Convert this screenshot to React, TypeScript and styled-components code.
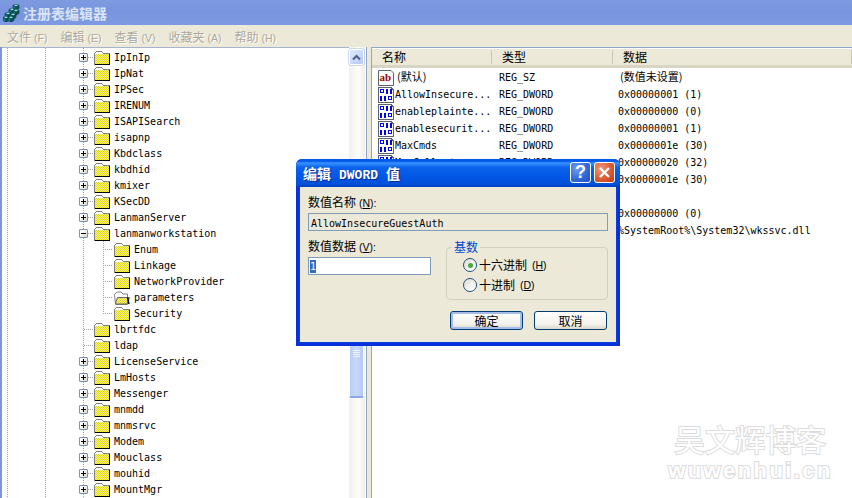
import React from "react";
import styled, { createGlobalStyle } from "styled-components";

const Global = createGlobalStyle`
  html, body { margin: 0; padding: 0; background: #fff; }
  * { box-sizing: border-box; }
`;

const mono = `"DejaVu Sans Mono", "Liberation Mono", "Noto Sans CJK SC", monospace`;
const cjk = `"Noto Sans CJK SC", "Liberation Sans", sans-serif`;

const Page = styled.div`
  position: relative;
  width: 852px;
  height: 498px;
  overflow: hidden;
  display: flex;
  flex-direction: column;
  background: #fff;
  color: #000;
`;

const TitleBar = styled.div`
  height: 25px;
  flex: none;
  display: flex;
  align-items: center;
  gap: 3px;
  padding-left: 3px;
  background: linear-gradient(180deg, #7e9ae0 0%, #7894de 45%, #7d9ae3 100%);
`;

const TitleText = styled.span`
  font: bold 14px ${cjk};
  color: #d9e4f8;
`;

const MenuBar = styled.div`
  height: 22px;
  flex: none;
  display: flex;
  align-items: center;
  gap: 13px;
  padding-left: 7px;
  background: #ece9d8;
`;

const MenuItem = styled.span`
  font: 12px ${cjk};
  color: #aca899;
  text-shadow: 1px 1px 0 #fff;
  white-space: nowrap;
`;

const Hotkey = styled.span`
  font: 10.5px "Liberation Sans", sans-serif;
  margin-left: 3px;
  white-space: nowrap;
`;

const Main = styled.div`
  flex: 1;
  min-height: 0;
  display: flex;
  border-left: 2px solid #7b96dc;
  background: #ece9d8;
`;

const TreePane = styled.div`
  width: 347px;
  flex: none;
  padding-top: 1px;
  border-top: 1px solid #a6b4cf;
  background-color: #fff;
  background-image:
    repeating-linear-gradient(180deg, #a0a0a0 0 1px, transparent 1px 2px),
    repeating-linear-gradient(180deg, #a0a0a0 0 1px, transparent 1px 2px),
    repeating-linear-gradient(180deg, #a0a0a0 0 1px, transparent 1px 2px);
  background-size: 1px 100%;
  background-repeat: no-repeat;
  background-position: 5px 0, 43px 0, 81px 0;
`;

const TreeRow = styled.div<{ $child?: boolean }>`
  height: 16px;
  display: flex;
  align-items: center;
  padding-left: ${(p) => (p.$child ? 101 : 77)}px;
  font: 10px ${mono};
  white-space: pre;
`;

const ExpandBox = styled.span`
  width: 9px;
  height: 9px;
  flex: none;
  position: relative;
  border: 1px solid #7c93ae;
  border-radius: 1px;
  background: linear-gradient(135deg, #fff 30%, #d5d2c4 100%);
`;

const ExpandBar = styled.span<{ $vertical?: boolean }>`
  position: absolute;
  background: #000;
  left: ${(p) => (p.$vertical ? 3 : 1)}px;
  top: ${(p) => (p.$vertical ? 1 : 3)}px;
  width: ${(p) => (p.$vertical ? 1 : 5)}px;
  height: ${(p) => (p.$vertical ? 5 : 1)}px;
`;

const DotLink = styled.span<{ $w: number }>`
  width: ${(p) => p.$w}px;
  height: 1px;
  flex: none;
  background: repeating-linear-gradient(90deg, #a0a0a0 0 1px, transparent 1px 2px);
`;

const NoBoxGap = styled.span`
  width: 5px;
  flex: none;
`;

const ChildGuide = styled.span<{ $last?: boolean }>`
  width: 11px;
  height: 16px;
  flex: none;
  display: flex;
  align-items: center;
  background-image: repeating-linear-gradient(180deg, #a0a0a0 0 1px, transparent 1px 2px);
  background-size: 1px ${(p) => (p.$last ? "8px" : "100%")};
  background-repeat: no-repeat;
`;

const FolderWrap = styled.span`
  width: 16px;
  height: 15px;
  flex: none;
  margin-right: 4px;
  display: flex;
`;

const Scrollbar = styled.div`
  width: 17px;
  flex: none;
  display: flex;
  flex-direction: column;
  padding-top: 2px;
  background: linear-gradient(90deg, #f3f1ec 0%, #fdfdfa 60%, #f0eee6 100%);
  border-right: 1px solid #fff;
`;

const ScrollUp = styled.div`
  height: 16px;
  flex: none;
  margin: 0 1px 0 0;
  border: 1px solid #fff;
  border-radius: 2px;
  display: flex;
  align-items: center;
  justify-content: center;
  background: linear-gradient(135deg, #dfe9fd 0%, #b6caf6 100%);
  box-shadow: 0 0 0 0.5px #9cb4e6;
`;

const ScrollThumb = styled.div`
  height: 88px;
  flex: none;
  margin: 245px 1px 0 0;
  border: 1px solid #fff;
  border-bottom: 2px solid #8aa7ea;
  border-radius: 2px;
  background: linear-gradient(90deg, #b8ccf7 0%, #c9d8fb 50%, #b2c8f8 100%);
  display: flex;
  align-items: center;
  justify-content: center;
`;

const Splitter = styled.div`
  width: 6px;
  flex: none;
  border-left: 1px solid #8da7c8;
  border-right: 1px solid #8da7c8;
  background: #ece9d8;
`;

const ListPane = styled.div`
  flex: 1;
  min-width: 0;
  background: #fff;
  border-top: 1px solid #8da7c8;
  padding-top: 1px;
`;

const ListHeader = styled.div`
  height: 19px;
  display: flex;
  align-items: center;
  background: #ece9d8;
  border-bottom: 3px solid #d8d5c4;
  font: 12px ${cjk};
`;

const HeaderCell = styled.span<{ $w: number }>`
  width: ${(p) => p.$w}px;
  flex: none;
  padding-left: 10px;
  height: 14px;
  line-height: 14px;
  border-right: 1px solid #c9c6b4;
`;

const ListBody = styled.div`
  padding-top: 1px;
`;

const ListRow = styled.div`
  height: 17px;
  display: flex;
  align-items: center;
  padding-left: 6px;
  font: 10px ${mono};
  white-space: pre;
`;

const IconCell = styled.span`
  width: 16px;
  height: 16px;
  flex: none;
  margin-right: 1px;
  display: flex;
`;

const NameCell = styled.span`
  width: 104px;
  flex: none;
  font-family: ${mono};
`;

const TypeCell = styled.span`
  width: 119px;
  flex: none;
`;

const DataCell = styled.span`
  flex: 1;
`;

const CjkInline = styled.span<{ $pad?: number }>`
  display: block;
  font: 11px/11px ${cjk};
  margin-top: -3px;
  padding-left: ${(p) => p.$pad ?? 0}px;
`;

const Dialog = styled.div`
  position: absolute;
  left: 296px;
  top: 159px;
  width: 324px;
  height: 187px;
  display: flex;
  flex-direction: column;
  border: 3px solid #0831d9;
  border-top: 0;
  border-radius: 6px 6px 0 0;
  background: #ece9d8;
  box-shadow: inset 0 0 0 1px #0a3fdc;
`;

const DialogTitle = styled.div`
  height: 28px;
  flex: none;
  margin: 0 -3px;
  display: flex;
  align-items: center;
  justify-content: space-between;
  padding: 0 5px 1px 7px;
  border-radius: 6px 6px 0 0;
  background: linear-gradient(180deg, #0a58e3 0%, #0058ee 8%, #3a93ff 14%, #0a63ea 30%, #0054e3 70%, #0450d8 90%, #003dc4 100%);
`;

const DialogTitleText = styled.span`
  font: bold 14px ${cjk};
  color: #fff;
  text-shadow: 1px 1px 0 #0a2a8a;
  white-space: pre;
`;

const DialogTitleLatin = styled.span`
  font: bold 13px "Liberation Mono", monospace;
  margin: 0 8px;
`;

const CaptionButtons = styled.div`
  display: flex;
  gap: 3px;
`;

const CaptionButton = styled.span<{ $close?: boolean }>`
  width: 21px;
  height: 21px;
  border: 1px solid #fff;
  border-radius: 3px;
  display: flex;
  align-items: center;
  justify-content: center;
  font: bold 18px "Liberation Sans", sans-serif;
  color: #fff;
  background: ${(p) =>
    p.$close
      ? "radial-gradient(circle at 30% 30%, #ee9a7c 0%, #dc5a35 55%, #c13a15 100%)"
      : "radial-gradient(circle at 30% 30%, #6f9cf2 0%, #2f66d8 60%, #1f50c4 100%)"};
`;

const DialogBody = styled.div`
  flex: 1;
  display: flex;
  flex-direction: column;
  padding: 7px 9px 0 9px;
`;

const FieldLabel = styled.div`
  height: 16px;
  font: 12px/16px ${cjk};
  white-space: pre;
  color: #000;
`;

const Underlined = styled.span`
  text-decoration: underline;
`;

const NameField = styled.div`
  height: 18px;
  margin-top: 3px;
  border: 1px solid #7f9db9;
  background: #ece9d8;
  padding: 2px 0 0 2px;
  font: 10px/16px ${mono};
`;

const ValueRow = styled.div`
  display: flex;
  gap: 15px;
  margin-top: 7px;
`;

const ValueColumn = styled.div`
  width: 123px;
  flex: none;
`;

const ValueInput = styled.div`
  height: 18px;
  margin-top: 3px;
  border: 1px solid #7f9db9;
  background: #fff;
  padding: 2px 0 0 1px;
  display: flex;
`;

const Selected = styled.span`
  width: 6px;
  height: 13px;
  background: #316ac5;
  color: #fff;
  font: 10px/13px ${mono};
`;

const GroupBox = styled.div`
  position: relative;
  width: 162px;
  height: 53px;
  margin-top: 9px;
  padding: 10px 0 0 16px;
  border: 1px solid #d0d0bf;
  border-radius: 4px;
  display: flex;
  flex-direction: column;
  gap: 6px;
`;

const Legend = styled.span`
  position: absolute;
  left: 5px;
  top: -9px;
  padding: 0 2px;
  background: #ece9d8;
  color: #0046d5;
  font: 12px/16px ${cjk};
`;

const RadioRow = styled.div`
  height: 14px;
  display: flex;
  align-items: center;
  gap: 2px;
  font: 12px/14px ${cjk};
  white-space: pre;
`;

const RadioCircle = styled.span<{ $on?: boolean }>`
  width: 14px;
  height: 14px;
  flex: none;
  border: 1px solid #1c5180;
  border-radius: 50%;
  background: linear-gradient(135deg, #dcd9ca 0%, #fff 80%);
  display: flex;
  align-items: center;
  justify-content: center;
  &::after {
    content: "";
    display: ${(p) => (p.$on ? "block" : "none")};
    width: 5px;
    height: 5px;
    border-radius: 50%;
    background: #3fae3b;
  }
`;

const ButtonRow = styled.div`
  display: flex;
  justify-content: flex-end;
  gap: 11px;
  margin-top: 11px;
  padding-right: 1px;
`;

const DialogButton = styled.span<{ $default?: boolean }>`
  width: 73px;
  height: 19px;
  border: 1px solid #003c74;
  border-radius: 3px;
  display: flex;
  align-items: center;
  justify-content: center;
  font: 12px ${cjk};
  background: linear-gradient(180deg, #fff 0%, #f3f2ec 70%, #dcd8ce 100%);
  box-shadow: ${(p) => (p.$default ? "inset 0 0 0 2px #a5bde8" : "none")};
`;

const Watermark = styled.div`
  position: absolute;
  left: 658px;
  top: 420px;
  width: 185px;
  text-align: center;
  pointer-events: none;
`;

const WatermarkTitle = styled.div`
  font: 30px/36px ${cjk};
  letter-spacing: 0.4px;
  color: #fff;
  -webkit-text-stroke: 2px #dcdcdc;
  paint-order: stroke fill;
  white-space: nowrap;
`;

const WatermarkUrl = styled.div`
  margin-top: 3px;
  font: bold 22px/24px "Liberation Sans", sans-serif;
  letter-spacing: 2.4px;
  color: #fff;
  -webkit-text-stroke: 2px #dcdcdc;
  paint-order: stroke fill;
  white-space: nowrap;
`;

const Cube = ({ x, y }: { x: number; y: number }) => (
  <g transform={`translate(${x} ${y})`}>
    <polygon points="0,1.5 3,0 6,1.5 3,3" fill="#7fe8e4" stroke="#06282e" strokeWidth="0.6" />
    <polygon points="0,1.5 3,3 3,6 0,4.5" fill="#138a8e" stroke="#06282e" strokeWidth="0.6" />
    <polygon points="3,3 6,1.5 6,4.5 3,6" fill="#0c5f68" stroke="#06282e" strokeWidth="0.6" />
  </g>
);

const AppIcon = () => (
  <svg width="17" height="18" viewBox="0 0 17 18">
    <Cube x={10} y={0} />
    <Cube x={6} y={4} />
    <Cube x={10} y={5} />
    <Cube x={2} y={8} />
    <Cube x={7} y={9} />
    <Cube x={0} y={12} />
    <Cube x={5} y={12} />
  </svg>
);

const FolderClosed = () => (
  <svg width="16" height="15" viewBox="0 0 16 15" shapeRendering="crispEdges">
    <defs>
      <pattern id="dith" width="2" height="2" patternUnits="userSpaceOnUse">
        <rect width="2" height="2" fill="#ffff33" />
        <rect width="1" height="1" fill="#d8cf60" />
        <rect x="1" y="1" width="1" height="1" fill="#d8cf60" />
      </pattern>
    </defs>
    <path d="M0.5 3.5V14.5H15.5V3.5H9.5L7.5 1.5H2.5L0.5 3.5Z" fill="#fff" stroke="#808080" />
    <rect x="1" y="4" width="14" height="10" fill="url(#dith)" />
    <rect x="1" y="14" width="15" height="1" fill="#000" />
    <rect x="15" y="4" width="1" height="11" fill="#000" />
  </svg>
);

const FolderOpen = () => (
  <svg width="16" height="15" viewBox="0 0 16 15">
    <path d="M0.5 4.5L3 2H7L9 4H13.5V7.5H15.5L13.5 14.5H1.5Z" fill="#fff" stroke="#808080" />
    <path d="M1.5 13L3.5 7.5H15L13 14H2Z" fill="url(#dith)" stroke="#666" />
    <path d="M13.5 7.5L15 14" stroke="#000" strokeWidth="1.4" />
  </svg>
);

const PageShape = () => (
  <path d="M0.5 0.5H13L15.5 3V15.5H0.5Z" fill="#fff" stroke="#5a6470" />
);

const StringIcon = () => (
  <svg width="16" height="16" viewBox="0 0 16 16">
    <PageShape />
    <text x="1.5" y="10.5" fontFamily="Liberation Serif" fontWeight="bold" fontSize="11" fill="#a00000">ab</text>
  </svg>
);

const BinaryIcon = () => (
  <svg width="16" height="16" viewBox="0 0 16 16" shapeRendering="crispEdges">
    <PageShape />
    <g fill="none" stroke="#0000ff">
      <rect x="2.5" y="2.5" width="3" height="3" />
      <path d="M9 1.5V6.5M13 1.5V6.5M3 8.5V13.5M7 8.5V13.5" strokeWidth="2" />
      <rect x="10.5" y="9.5" width="3" height="3" />
    </g>
  </svg>
);

type Node = { name: string; box?: "+" | "-"; child?: boolean; last?: boolean; open?: boolean };

const NODES: Node[] = [
  { name: "IpInIp", box: "+" },
  { name: "IpNat", box: "+" },
  { name: "IPSec", box: "+" },
  { name: "IRENUM", box: "+" },
  { name: "ISAPISearch", box: "+" },
  { name: "isapnp", box: "+" },
  { name: "Kbdclass", box: "+" },
  { name: "kbdhid", box: "+" },
  { name: "kmixer", box: "+" },
  { name: "KSecDD", box: "+" },
  { name: "LanmanServer", box: "+" },
  { name: "lanmanworkstation", box: "-" },
  { name: "Enum", child: true },
  { name: "Linkage", child: true },
  { name: "NetworkProvider", child: true },
  { name: "parameters", child: true, open: true },
  { name: "Security", child: true, last: true },
  { name: "lbrtfdc" },
  { name: "ldap" },
  { name: "LicenseService", box: "+" },
  { name: "LmHosts", box: "+" },
  { name: "Messenger", box: "+" },
  { name: "mnmdd", box: "+" },
  { name: "mnmsrvc", box: "+" },
  { name: "Modem", box: "+" },
  { name: "Mouclass", box: "+" },
  { name: "mouhid", box: "+" },
  { name: "MountMgr", box: "+" },
];

const VALUES = [
  { name: "(默认)", type: "REG_SZ", data: "(数值未设置)", str: true },
  { name: "AllowInsecure...", type: "REG_DWORD", data: "0x00000001 (1)" },
  { name: "enableplainte...", type: "REG_DWORD", data: "0x00000000 (0)" },
  { name: "enablesecurit...", type: "REG_DWORD", data: "0x00000001 (1)" },
  { name: "MaxCmds", type: "REG_DWORD", data: "0x0000001e (30)" },
  { name: "MaxCollect...", type: "REG_DWORD", data: "0x00000020 (32)" },
  { name: "", type: "", data: "0x0000001e (30)" },
  { name: "", type: "", data: "" },
  { name: "", type: "", data: "0x00000000 (0)" },
  { name: "", type: "", data: "%SystemRoot%\\System32\\wkssvc.dll" },
];

const MENUS = [
  ["文件", "(F)"],
  ["编辑", "(E)"],
  ["查看", "(V)"],
  ["收藏夹", "(A)"],
  ["帮助", "(H)"],
];

export default function App() {
  return (
    <Page>
      <Global />
      <TitleBar>
        <AppIcon />
        <TitleText>注册表编辑器</TitleText>
      </TitleBar>
      <MenuBar>
        {MENUS.map(([label, key]) => (
          <MenuItem key={label}>
            {label}
            <Hotkey>{key}</Hotkey>
          </MenuItem>
        ))}
      </MenuBar>
      <Main>
        <TreePane>
          {NODES.map((n) => (
            <TreeRow key={n.name} $child={n.child}>
              {n.child ? (
                <ChildGuide $last={n.last}>
                  <DotLink $w={10} />
                </ChildGuide>
              ) : n.box ? (
                <>
                  <ExpandBox>
                    <ExpandBar />
                    {n.box === "+" && <ExpandBar $vertical />}
                  </ExpandBox>
                  <DotLink $w={6} />
                </>
              ) : (
                <>
                  <NoBoxGap />
                  <DotLink $w={10} />
                </>
              )}
              <FolderWrap>{n.open ? <FolderOpen /> : <FolderClosed />}</FolderWrap>
              {n.name}
            </TreeRow>
          ))}
        </TreePane>
        <Scrollbar>
          <ScrollUp>
            <svg width="9" height="7" viewBox="0 0 9 7">
              <path d="M1 5.5L4.5 2L8 5.5" fill="none" stroke="#4d6185" strokeWidth="2" />
            </svg>
          </ScrollUp>
          <ScrollThumb>
            <svg width="7" height="8" viewBox="0 0 7 8" shapeRendering="crispEdges">
              <path d="M0 0.5H7M0 2.5H7M0 4.5H7M0 6.5H7" stroke="#eef4fe" />
            </svg>
          </ScrollThumb>
        </Scrollbar>
        <Splitter />
        <ListPane>
          <ListHeader>
            <HeaderCell $w={120}>名称</HeaderCell>
            <HeaderCell $w={121}>类型</HeaderCell>
            <HeaderCell $w={239}>数据</HeaderCell>
          </ListHeader>
          <ListBody>
            {VALUES.map((v, i) => (
              <ListRow key={i}>
                <IconCell>{v.name ? v.str ? <StringIcon /> : <BinaryIcon /> : null}</IconCell>
                <NameCell>{v.str ? <CjkInline $pad={2}>{v.name}</CjkInline> : v.name}</NameCell>
                <TypeCell>{v.type}</TypeCell>
                <DataCell>{v.str ? <CjkInline $pad={2}>{v.data}</CjkInline> : v.data}</DataCell>
              </ListRow>
            ))}
          </ListBody>
        </ListPane>
      </Main>

      <Watermark>
        <WatermarkTitle>吴文辉博客</WatermarkTitle>
        <WatermarkUrl>wuwenhui.cn</WatermarkUrl>
      </Watermark>

      <Dialog>
        <DialogTitle>
          <DialogTitleText>
            编辑<DialogTitleLatin>DWORD</DialogTitleLatin>值
          </DialogTitleText>
          <CaptionButtons>
            <CaptionButton>?</CaptionButton>
            <CaptionButton $close>
              <svg width="13" height="13" viewBox="0 0 13 13">
                <path d="M2 2L11 11M11 2L2 11" stroke="#fff" strokeWidth="2.4" />
              </svg>
            </CaptionButton>
          </CaptionButtons>
        </DialogTitle>
        <DialogBody>
          <FieldLabel>
            数值名称
            <Hotkey>
              (<Underlined>N</Underlined>):
            </Hotkey>
          </FieldLabel>
          <NameField>AllowInsecureGuestAuth</NameField>
          <ValueRow>
            <ValueColumn>
              <FieldLabel>
                数值数据
                <Hotkey>
                  (<Underlined>V</Underlined>):
                </Hotkey>
              </FieldLabel>
              <ValueInput>
                <Selected>1</Selected>
              </ValueInput>
            </ValueColumn>
            <GroupBox>
              <Legend>基数</Legend>
              <RadioRow>
                <RadioCircle $on />
                十六进制
                <Hotkey>
                  (<Underlined>H</Underlined>)
                </Hotkey>
              </RadioRow>
              <RadioRow>
                <RadioCircle />
                十进制
                <Hotkey>
                  (<Underlined>D</Underlined>)
                </Hotkey>
              </RadioRow>
            </GroupBox>
          </ValueRow>
          <ButtonRow>
            <DialogButton $default>确定</DialogButton>
            <DialogButton>取消</DialogButton>
          </ButtonRow>
        </DialogBody>
      </Dialog>
    </Page>
  );
}
